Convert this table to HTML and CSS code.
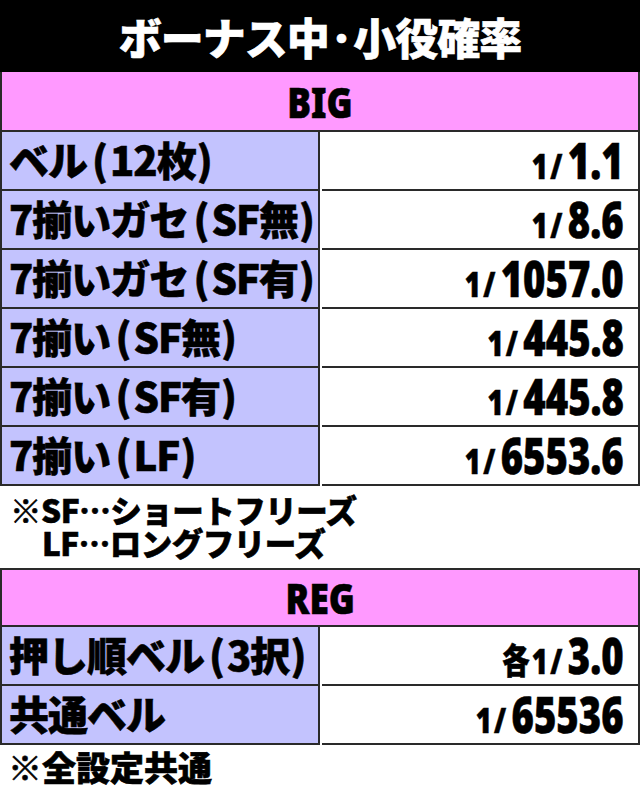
FILE: index.html
```html
<!DOCTYPE html>
<html lang="ja">
<head>
<meta charset="utf-8">
<link rel="stylesheet" href="styles.css">
</head>
<body>
<div class="title">ボーナス中<span class="dot">･</span>小役確率</div>
<div class="tbl">
  <div class="head"><span class="hd">BIG</span></div>
  <div class="lab">ベル<span class="po">(</span>12枚<span class="pc">)</span></div>
  <div class="val"><span class="v"><span class="pre">1/</span><span class="num">1.1</span></span></div>
  <div class="lab">7揃いガセ<span class="po">(</span>SF無<span class="pc">)</span></div>
  <div class="val"><span class="v"><span class="pre">1/</span><span class="num">8.6</span></span></div>
  <div class="lab">7揃いガセ<span class="po">(</span>SF有<span class="pc">)</span></div>
  <div class="val"><span class="v"><span class="pre">1/</span><span class="num">1057.0</span></span></div>
  <div class="lab">7揃い<span class="po">(</span>SF無<span class="pc">)</span></div>
  <div class="val"><span class="v"><span class="pre">1/</span><span class="num">445.8</span></span></div>
  <div class="lab">7揃い<span class="po">(</span>SF有<span class="pc">)</span></div>
  <div class="val"><span class="v"><span class="pre">1/</span><span class="num">445.8</span></span></div>
  <div class="lab">7揃い<span class="po">(</span>LF<span class="pc">)</span></div>
  <div class="val"><span class="v"><span class="pre">1/</span><span class="num">6553.6</span></span></div>
</div>
<div class="note">
  <div class="nl">※SF…ショートフリーズ</div>
  <div class="nl indent">LF…ロングフリーズ</div>
</div>
<div class="tbl tbl-top">
  <div class="head"><span class="hd">REG</span></div>
  <div class="lab">押し順ベル<span class="po">(</span>3択<span class="pc">)</span></div>
  <div class="val"><span class="v"><span class="pre">各1/</span><span class="num">3.0</span></span></div>
  <div class="lab">共通ベル</div>
  <div class="val"><span class="v"><span class="pre">1/</span><span class="num">65536</span></span></div>
</div>
<div class="foot">※全設定共通</div>
</body>
</html>
```
FILE: styles.css
```css
html, body {
  margin: 0;
  padding: 0;
  background: #ffffff;
}
body {
  width: 640px;
  font-family: "Noto Sans CJK JP", "Noto Sans", sans-serif;
  font-weight: 900;
  color: #000;
  -webkit-text-stroke: 0.6px currentColor;
}
.title {
  height: 72px;
  background: #000;
  color: #fff;
  font-size: 43px;
  line-height: 72px;
  text-align: center;
  letter-spacing: -1px;
}
.dot {
  margin: 0 2px;
}
.tbl {
  display: grid;
  grid-template-columns: 320px 1fr;
  border-left: 2px solid #2a2a2a;
}
.tbl-top {
  border-top: 2px solid #2a2a2a;
}
.tbl > div {
  box-sizing: border-box;
  border-right: 2px solid #2a2a2a;
  border-bottom: 2px solid #2a2a2a;
  height: 59px;
}
.tbl > .lab {
  width: 318px;
}
.tbl .head {
  grid-column: 1 / -1;
  background: #ff99ff;
  height: 60px;
  display: flex;
  align-items: center;
  justify-content: center;
}
.tbl-top .head {
  height: 57px;
}
.hd {
  display: inline-block;
  font-family: "Noto Sans", sans-serif;
  font-size: 43px;
  line-height: 1;
  transform: scaleX(0.82);
}
.lab {
  background: #c3c3fe;
  font-size: 40px;
  line-height: 55px;
  padding-left: 7px;
  white-space: nowrap;
  letter-spacing: -1px;
}
.po {
  margin: 0 3px 0 5px;
}
.pc {
  margin-left: 1px;
}
.val {
  background: #fff;
  display: flex;
  align-items: center;
  justify-content: flex-end;
  padding-right: 14px;
}
.v {
  display: inline-block;
  white-space: nowrap;
  transform: scaleX(0.78);
  transform-origin: right center;
  font-family: "Noto Sans", "Noto Sans CJK JP", sans-serif;
  line-height: 0.9;
}
.pre {
  font-size: 35px;
  letter-spacing: 3px;
  margin-right: 4px;
}
.pre, .num {
  font-family: "Noto Sans", "Noto Sans CJK JP", sans-serif;
}
.num {
  font-size: 49px;
}
.note {
  height: 82px;
  box-sizing: border-box;
  padding: 7px 0 0 10px;
  font-size: 31.5px;
  letter-spacing: -0.5px;
}
.nl {
  height: 33px;
  line-height: 33px;
}
.indent {
  padding-left: 32px;
}
.foot {
  height: 44px;
  font-size: 34px;
  line-height: 44px;
  padding-left: 8px;
}
```
